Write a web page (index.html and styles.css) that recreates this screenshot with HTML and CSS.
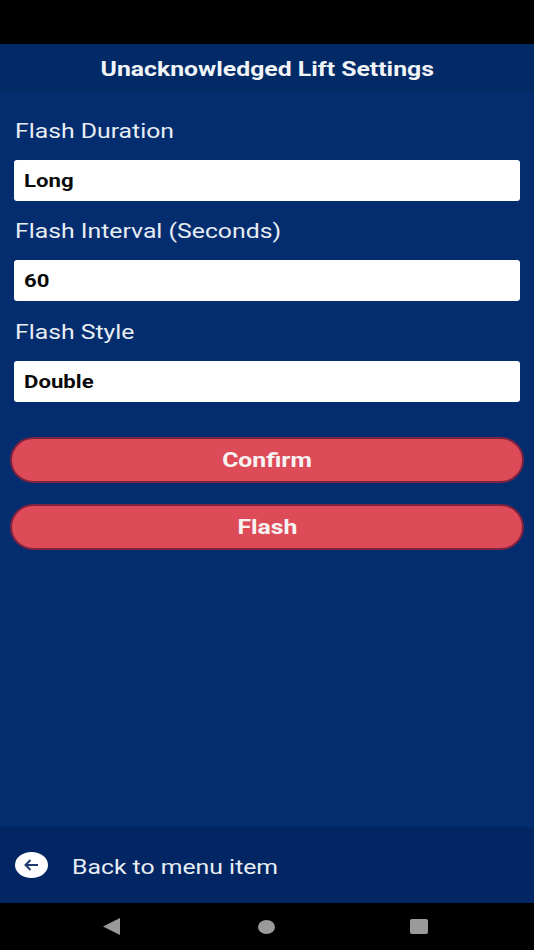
FILE: index.html
```html
<!DOCTYPE html>
<html lang="en">
<head>
    <meta charset="UTF-8">
    <meta name="viewport" content="width=device-width, initial-scale=1.0">
    <title>Unacknowledged Lift Settings</title>
    <link rel="stylesheet" href="styles.css">
</head>
<body>

<div class="status-bar"></div>

<div class="app-header">
    <h1 class="wide-center">Unacknowledged Lift Settings</h1>
</div>

<div class="settings">
    <div class="form-group">
        <label><span class="wide">Flash Duration</span></label>
        <div class="select-box"><span class="wide">Long</span></div>
    </div>
    <div class="form-group">
        <label><span class="wide">Flash Interval (Seconds)</span></label>
        <div class="select-box"><span class="wide">60</span></div>
    </div>
    <div class="form-group">
        <label><span class="wide">Flash Style</span></label>
        <div class="select-box"><span class="wide">Double</span></div>
    </div>
    <div class="buttons">
        <button type="button"><span class="wide-center">Confirm</span></button>
        <button type="button"><span class="wide-center">Flash</span></button>
    </div>
</div>

<div class="back-bar">
    <span class="back-icon">
        <svg width="20" height="14" viewBox="0 0 20 14">
            <path d="M8.5 2 L3.5 7 L8.5 12 M3.5 7 H16" fill="none" stroke="#1d3a70" stroke-width="2"/>
        </svg>
    </span>
    <span class="back-text"><span class="wide">Back to menu item</span></span>
</div>

<div class="nav-bar">
    <svg width="18" height="17" viewBox="0 0 18 17"><polygon points="0,8.5 17,0 17,17" fill="#9a9a9a"/></svg>
    <span class="nav-home"></span>
    <span class="nav-recent"></span>
</div>

</body>
</html>
```

FILE: styles.css
```css
html, body {
    height: 100%;
}
body {
    font-family: Roboto, "Liberation Sans", sans-serif;
    background-color: #032d6f;
    margin: 0;
    display: flex;
    flex-direction: column;
}
/* the text in the screenshot is stretched sideways */
.wide, .wide-center {
    display: inline-block;
    transform: scaleX(1.18);
}
.wide {
    transform-origin: left center;
}
.status-bar {
    height: 44px;
    background-color: #000;
}
.app-header {
    height: 49px;
    background-color: #012a66;
    display: flex;
    align-items: center;
    justify-content: center;
}
.app-header h1 {
    margin: 0;
    color: #f2f5f8;
    font-size: 21px;
    font-weight: 700;
}
.settings {
    flex: 1;
    padding: 0 10px;
}
.form-group {
    padding: 0 4px 0;
    height: 100.4px;
}
label {
    display: block;
    height: 67px;
    line-height: 77px;
    padding-left: 1px;
    color: #e8edf3;
    font-size: 21px;
}
.select-box {
    height: 41px;
    line-height: 42px;
    padding-left: 10px;
    width: 496px;
    background-color: #fff;
    border-radius: 3px;
    color: #0a0a0a;
    font-size: 18.8px;
    font-weight: 700;
}
.buttons {
    margin-top: 43px;
    display: flex;
    flex-direction: column;
    gap: 21px;
}
button {
    font-family: inherit;
    display: block;
    width: 514px;
    height: 46px;
    background-color: #dd4b58;
    border: 2px solid #7f2240;
    border-radius: 23px;
    color: #f7f3f3;
    font-size: 21px;
    font-weight: 700;
    padding: 0;
}
.back-bar {
    height: 76px;
    background-color: #012663;
    display: flex;
    align-items: center;
    padding-left: 15px;
}
.back-icon {
    width: 33px;
    height: 26px;
    background-color: #fff;
    border-radius: 50%;
    display: flex;
    align-items: center;
    justify-content: center;
}
.back-text {
    margin-left: 24px;
    padding-top: 3px;
    color: #e8edf3;
    font-size: 21px;
}
.nav-bar {
    height: 47px;
    background-color: #000;
    display: flex;
    align-items: center;
    padding-left: 103px;
}
.nav-home {
    width: 17px;
    height: 14px;
    margin-left: 137px;
    border-radius: 50%;
    background-color: #9a9a9a;
}
.nav-recent {
    width: 18px;
    height: 15px;
    margin-left: 135px;
    border-radius: 2px;
    background-color: #9a9a9a;
}
```
